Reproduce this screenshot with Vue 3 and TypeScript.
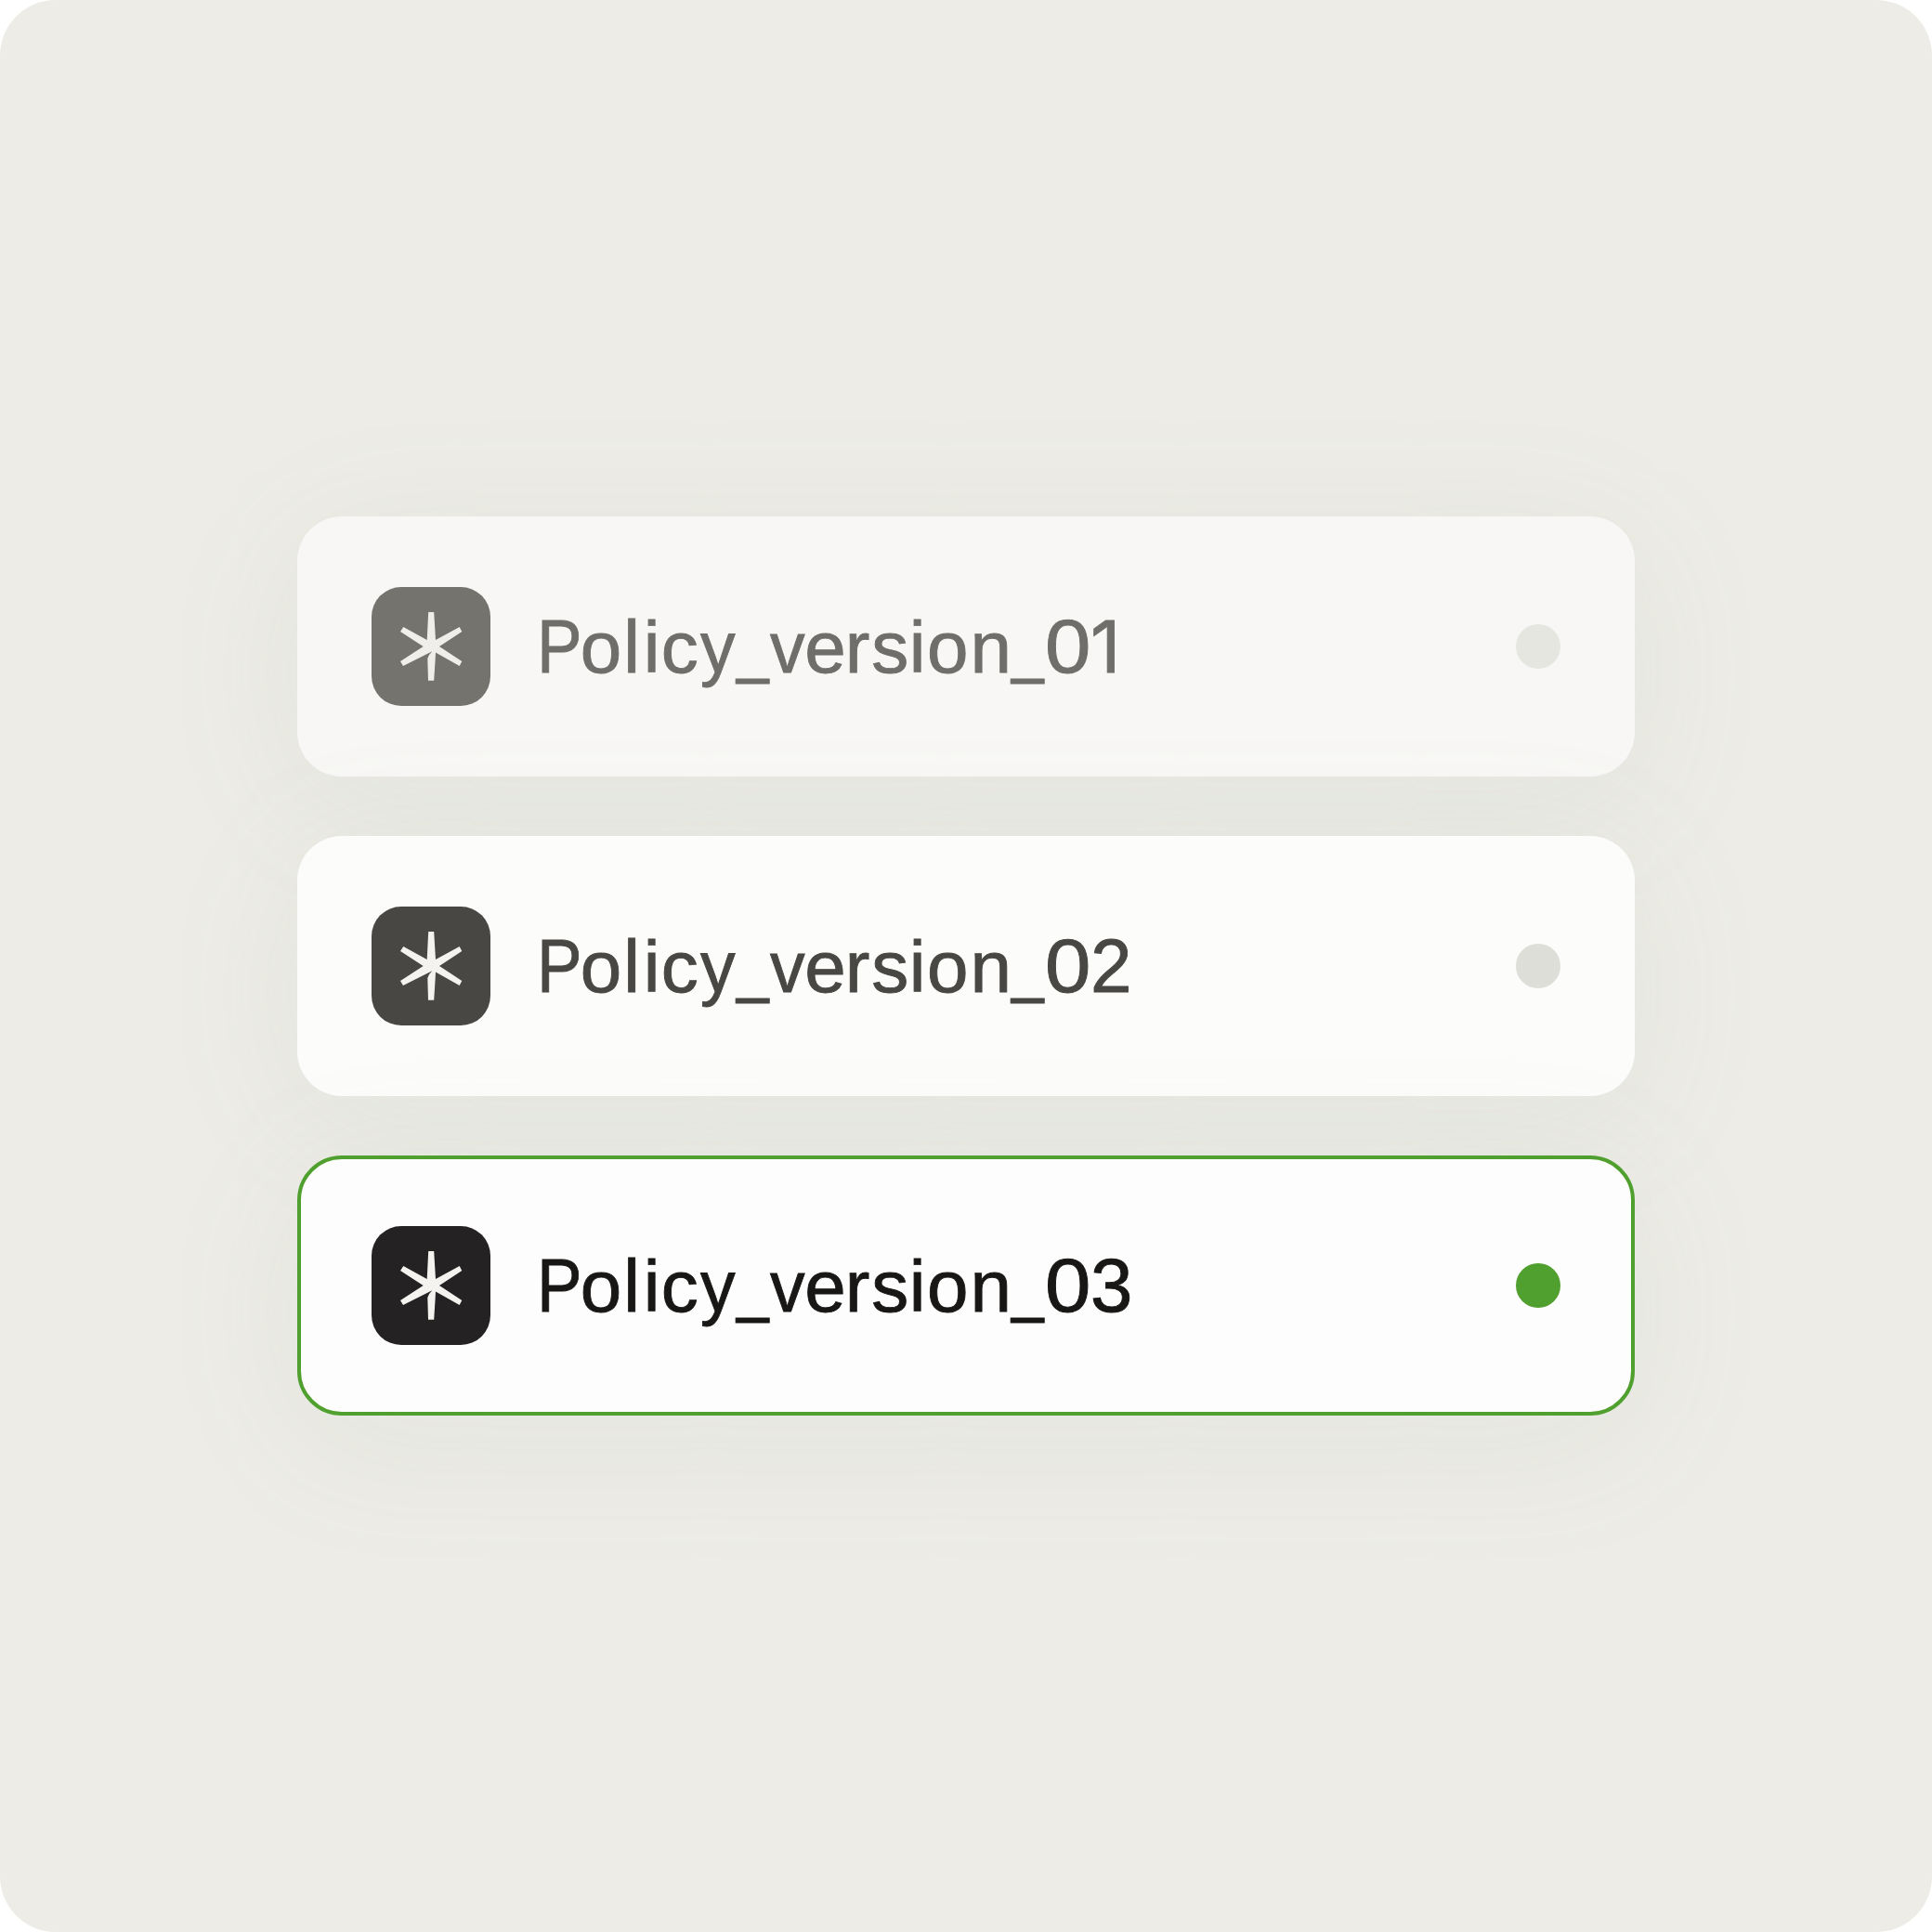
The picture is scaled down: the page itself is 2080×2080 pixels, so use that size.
<script setup lang="ts">
interface Glyph {
  advance: number
  x?: number
  y?: number
}

interface Policy {
  id: string
  label: string
  state: 'old' | 'previous' | 'current'
}

const policies: Policy[] = [
  { id: '01', label: 'Policy_version_01', state: 'old' },
  { id: '02', label: 'Policy_version_02', state: 'previous' },
  { id: '03', label: 'Policy_version_03', state: 'current' },
]

// Spacing (px) and proportions of the label lettering at the 80px type size.
const glyphs: Record<string, Glyph> = {
  P: { advance: 46.8, x: 0.91, y: 1.025 },
  o: { advance: 46.5 },
  l: { advance: 21.4, y: 1 },
  i: { advance: 19.1 },
  c: { advance: 42.4 },
  y: { advance: 39, x: 0.94 },
  _: { advance: 35.9, x: 0.778, y: 1 },
  v: { advance: 37.1, x: 0.94 },
  e: { advance: 43.7 },
  r: { advance: 28.5 },
  s: { advance: 40.5 },
  n: { advance: 44.8 },
  '0': { advance: 48.8, x: 1.11, y: 1.02 },
  '1': { advance: 44, y: 0.96 },
  '2': { advance: 44, x: 1, y: 1.02 },
  '3': { advance: 44, x: 1.02, y: 1.02 },
}

function glyphStyle(ch: string) {
  const g = glyphs[ch]
  return { width: `${g.advance}px`, transform: `scale(${g.x ?? 1}, ${g.y ?? 0.965})` }
}
</script>

<template>
  <main class="panel">
    <article v-for="p in policies" :key="p.id" class="card" :class="p.state">
      <span class="mark">
        <svg viewBox="0 0 128 128" aria-hidden="true">
          <path
            d="M61.2 27H67.2L69 57 94.7 43 97.3 48 73 64 97.3 80 94.7 85 69 70.5 68.7 77 67.2 100.7H61L60.3 77Q61.3 73 65.3 69.3L34 85 31 80 55.7 64 31 48 34.3 43 59.7 57Z"
          />
        </svg>
      </span>
      <span class="label"><span v-for="(ch, i) in p.label" :key="i" class="glyph" :class="{ low: ch === '_', one: ch === '1' }" :style="glyphStyle(ch)">{{ ch }}</span></span>
      <span class="dot"></span>
    </article>
  </main>
</template>

<style>
body {
  margin: 0;
  background: #fff;
}
</style>

<style scoped>
.panel {
  box-sizing: border-box;
  width: 2080px;
  height: 2080px;
  padding: 0 320px;
  display: flex;
  flex-direction: column;
  justify-content: center;
  gap: 64px;
  overflow: hidden;
  border-radius: 60px;
  background: #edece6;
  font-family: 'Liberation Sans', Arial, sans-serif;
}
.card {
  box-sizing: border-box;
  height: 280px;
  padding: 0 80px;
  display: flex;
  align-items: center;
  border-radius: 48px;
  box-shadow: 0 26px 150px rgba(150, 175, 155, 0.1);
}
.mark {
  width: 128px;
  height: 128px;
  border-radius: 32px;
  flex: none;
}
.mark svg {
  display: block;
  width: 128px;
  height: 128px;
  fill: #f4f3f0;
}
.label {
  margin: 2px 0 0 50px;
  flex: 1;
  display: flex;
  font-size: 80px;
  line-height: 92px;
  white-space: nowrap;
  -webkit-text-stroke: 0.9px currentColor;
}
.glyph {
  display: block;
  height: 92px;
  transform-origin: 0 74px;
}
.low {
  position: relative;
  top: -4px;
}
.one {
  font-family: Inter, sans-serif;
  line-height: 88px;
}
.dot {
  width: 48px;
  height: 48px;
  border-radius: 50%;
  flex: none;
  background: #e4e6df;
}
.old {
  background: #f8f7f5;
  color: #6f6e6a;
}
.old .mark {
  background: #74736e;
}
.old .mark svg {
  fill: #efeeeb;
}
.previous {
  background: #fcfcfa;
  color: #484744;
}
.previous .mark {
  background: #484744;
}
.previous .dot {
  background: #dcded7;
}
.current {
  padding: 0 76px;
  border: 4px solid #50a030;
  background: #fdfdfd;
  color: #181715;
}
.current .mark {
  background: #242223;
}
.current .dot {
  background: #50a030;
}
</style>
